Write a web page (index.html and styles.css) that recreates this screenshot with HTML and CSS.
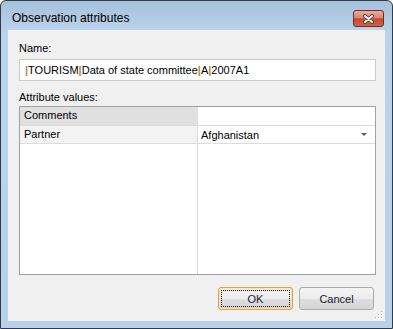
FILE: index.html
```html
<!DOCTYPE html>
<html lang="en">
<head>
    <meta charset="UTF-8">
    <title>Observation attributes</title>
    <link rel="stylesheet" href="styles.css">
</head>
<body>

<div class="window">
    <div class="titlebar">
        <span class="title">Observation attributes</span>
        <button class="close" type="button">
            <svg width="13" height="10" viewBox="0 0 13 10">
                <path d="M3 2 L10 8 M10 2 L3 8" stroke="#4b2b28" stroke-width="3.6" stroke-linecap="round"/>
                <path d="M3 2 L10 8 M10 2 L3 8" stroke="#ffffff" stroke-width="2" stroke-linecap="round"/>
            </svg>
        </button>
    </div>

    <div class="client">
        <div class="label name-label">Name:</div>
        <div class="textbox"><span class="sep">|</span>TOURISM<span class="sep">|</span>Data of state committee<span class="sep">|</span>A<span class="sep">|</span>2007A1</div>

        <div class="label values-label">Attribute values:</div>
        <div class="grid">
            <div class="row category">
                <div class="key">Comments</div>
                <div class="val"></div>
            </div>
            <div class="row item">
                <div class="key">Partner</div>
                <div class="val">Afghanistan <span class="arrow"></span></div>
            </div>
            <div class="filler">
                <div class="key"></div>
                <div class="val"></div>
            </div>
        </div>

        <div class="buttons">
            <button class="btn default" type="button">OK</button>
            <button class="btn" type="button">Cancel</button>
        </div>

        <svg class="grip" width="9" height="9" viewBox="0 0 9 9">
            <rect x="7" y="1" width="1" height="1" fill="#b8b8b8"/>
            <rect x="4" y="4" width="1" height="1" fill="#b8b8b8"/>
            <rect x="7" y="4" width="1" height="1" fill="#b8b8b8"/>
            <rect x="1" y="7" width="1" height="1" fill="#b8b8b8"/>
            <rect x="4" y="7" width="1" height="1" fill="#b8b8b8"/>
            <rect x="7" y="7" width="1" height="1" fill="#b8b8b8"/>
            <rect x="8" y="2" width="1" height="1" fill="#ffffff"/>
            <rect x="5" y="5" width="1" height="1" fill="#ffffff"/>
            <rect x="8" y="5" width="1" height="1" fill="#ffffff"/>
            <rect x="2" y="8" width="1" height="1" fill="#ffffff"/>
            <rect x="5" y="8" width="1" height="1" fill="#ffffff"/>
            <rect x="8" y="8" width="1" height="1" fill="#ffffff"/>
        </svg>
    </div>
</div>

</body>
</html>
```

FILE: styles.css
```css
body {
    margin: 0;
    background-color: #ffffff;
    font-family: "Liberation Sans", Arial, sans-serif;
    font-size: 11px;
    color: #000;
}

.window {
    width: 393px;
    height: 329px;
    box-sizing: border-box;
    border: 1px solid #2f3c4a;
    border-radius: 6px 6px 0 0;
    background: linear-gradient(#a8c1dc, #bad2eb 30px, #b9d1ea);
    display: flex;
    flex-direction: column;
}

.titlebar {
    height: 29px;
    display: flex;
    justify-content: space-between;
    align-items: flex-start;
    padding: 0 8px 0 11px;
}

.title {
    font-size: 12px;
    line-height: 15px;
    margin-top: 10px;
    color: #000;
}

.close {
    margin-top: 9px;
    width: 31px;
    height: 17px;
    box-sizing: border-box;
    padding: 0;
    border: 1px solid #6f2b22;
    border-radius: 3px;
    background: linear-gradient(#e9ad9d, #d98571 45%, #c4492f 52%, #cf6448);
    display: flex;
    align-items: center;
    justify-content: center;
}

.client {
    flex: 1;
    margin: 0 7px 7px;
    background-color: #f0f0f0;
    padding: 12px 9px 11px 11px;
    display: flex;
    flex-direction: column;
    position: relative;
}

.label {
    line-height: 13px;
}

.name-label {
    margin-bottom: 4px;
}

.textbox {
    height: 22px;
    box-sizing: border-box;
    border: 1px solid #cbcbcb;
    background-color: #fff;
    padding: 0 5px;
    line-height: 20px;
    white-space: nowrap;
}

/* separators are drawn a little heavier, like the original caret marks */
.sep {
    color: #b8843e;
    font-weight: bold;
}

.values-label {
    margin: 10px 0 2px;
}

.grid {
    height: 169px;
    box-sizing: border-box;
    border: 1px solid #a0a0a0;
    background-color: #fff;
    display: flex;
    flex-direction: column;
}

.row {
    display: flex;
    border-bottom: 1px solid #dcdcdc;
}

.key {
    width: 178px;
    box-sizing: border-box;
    border-right: 1px solid #dcdcdc;
    padding-left: 4px;
}

.val {
    flex: 1;
    padding: 0 8px 0 3px;
    display: flex;
    justify-content: space-between;
    align-items: center;
}

.category {
    height: 18px;
    line-height: 17px;
}

.category .key {
    background-color: #e0e0e0;
    border-right-color: #e0e0e0;
}

.item {
    height: 17px;
    line-height: 16px;
}

.item .key {
    background-color: #f3f3f3;
}

.arrow {
    width: 0;
    height: 0;
    border-left: 3px solid transparent;
    border-right: 3px solid transparent;
    border-top: 3px solid #5a5a5a;
}

.filler {
    flex: 1;
    display: flex;
}

.buttons {
    margin-top: 12px;
    display: flex;
    justify-content: flex-end;
    gap: 6px;
    padding-right: 2px;
}

.btn {
    width: 75px;
    height: 23px;
    box-sizing: border-box;
    border: 1px solid #acacac;
    border-radius: 3px;
    background: linear-gradient(#f3f3f3, #ececec 50%, #dfdfdf 52%, #d4d4d4);
    font-family: "Liberation Sans", Arial, sans-serif;
    font-size: 11px;
    color: #1b1b2b;
    padding: 0;
}

.btn.default {
    border-color: #dfa04c;
    box-shadow: inset 0 0 0 1px #fbe1ad;
    outline: 1px dotted #000;
    outline-offset: -4px;
}

.grip {
    position: absolute;
    right: 2px;
    bottom: 2px;
}
```
